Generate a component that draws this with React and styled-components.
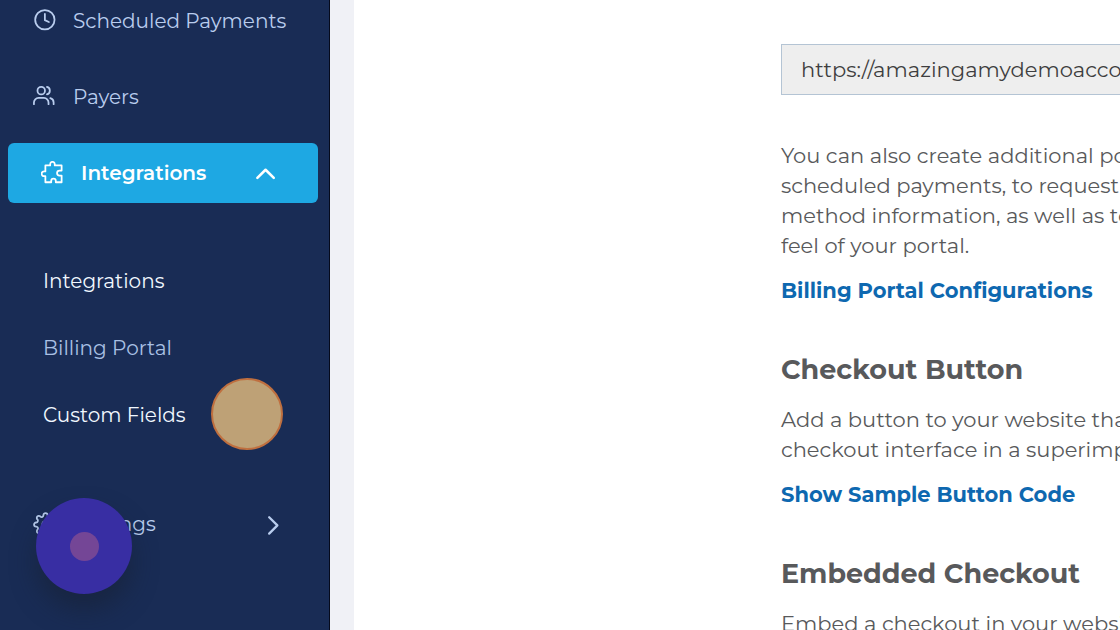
import React, { useState } from 'react'
import styled, { createGlobalStyle } from 'styled-components'
import { FiSettings } from 'react-icons/fi'

const GlobalStyle = createGlobalStyle`
  * {
    box-sizing: border-box;
  }
  body {
    margin: 0;
    background: #fff;
    font-family: Montserrat, Inter, sans-serif;
  }
`

const Page = styled.div`
  display: flex;
  height: 100vh;
  overflow: hidden;
`

const Sidebar = styled.aside`
  flex: none;
  width: 330px;
  background: #192c55;
  border-right: 1px solid #050a1c;
`

const Nav = styled.nav`
  display: flex;
  flex-direction: column;
  gap: 16px;
  margin-top: -9px;
`

const navRow = `
  display: flex;
  align-items: center;
  gap: 15px;
  height: 60px;
  padding: 0 36px 0 33px;
  font-size: 20px;
`

const NavLink = styled.a`
  ${navRow}
  color: #b9cdee;
  text-decoration: none;
`

const NavButton = styled.button`
  ${navRow}
  font-family: inherit;
  font-weight: ${(props) => (props.$active ? 600 : 400)};
  color: ${(props) => (props.$active ? '#fff' : '#b9cdee')};
  background: ${(props) => (props.$active ? '#1ea8e3' : 'transparent')};
  border: none;
  border-radius: 6px;
  margin: ${(props) => (props.$active ? '0 11px 0 8px' : '0 4px 0 0')};
  cursor: pointer;
`

const Label = styled.span`
  flex: 1;
  text-align: left;
`

const SubNav = styled.div`
  display: flex;
  flex-direction: column;
  margin: 28px 0 30px;
`

const SubLink = styled.a`
  position: relative;
  display: flex;
  align-items: center;
  height: 67px;
  padding-left: 43px;
  font-size: 20px;
  color: ${(props) => (props.$muted ? '#a9c0e4' : '#f1f8ff')};
  text-decoration: none;
`

const ClickMarker = styled.span`
  position: absolute;
  top: -3px;
  left: 211px;
  width: 72px;
  height: 72px;
  border-radius: 50%;
  background: #bea176;
  border: 2px solid #bf6f3f;
`

const Launcher = styled.button`
  position: fixed;
  left: 36px;
  bottom: 36px;
  display: flex;
  align-items: center;
  justify-content: center;
  width: 96px;
  height: 96px;
  padding: 0;
  border: none;
  border-radius: 50%;
  background: #382ea3;
  box-shadow: 0 16px 24px rgba(24, 34, 54, 0.6);
  cursor: pointer;
`

const LauncherDot = styled.span`
  width: 29px;
  height: 29px;
  border-radius: 50%;
  background: #744696;
`

const Main = styled.main`
  flex: 1;
  min-width: 0;
  overflow: hidden;
  border-left: 24px solid #f0f1f6;
  padding: 44px 0 0 427px;
  color: #58595b;
  white-space: nowrap;
`

const UrlInput = styled.input`
  display: block;
  width: 640px;
  height: 51px;
  margin-bottom: 46px;
  padding: 0 19px;
  border: 1px solid #b4c4d4;
  background: #eee;
  color: #3e3e40;
  font-family: inherit;
  font-size: 21px;
  font-weight: 400;
`

const Section = styled.section`
  margin-bottom: 46px;
`

const Title = styled.h2`
  margin: 0 0 17px;
  font-size: 27px;
  line-height: 36px;
  font-weight: 700;
`

const Text = styled.p`
  margin: 0 0 15px;
  font-size: 21px;
  line-height: 30px;
  font-weight: 400;
`

const TextLink = styled.a`
  display: block;
  font-size: 21px;
  line-height: 30px;
  font-weight: 700;
  color: #0e68b0;
  text-decoration: none;
`

const Icon = ({ size = 24, width = 2, children }) => (
  <svg
    width={size}
    height={size}
    viewBox="0 0 24 24"
    fill="none"
    stroke="currentColor"
    strokeWidth={width}
    strokeLinecap="round"
    strokeLinejoin="round"
    aria-hidden="true"
  >
    {children}
  </svg>
)

const ClockIcon = () => (
  <Icon size={25} width={1.7}>
    <circle cx="11.4" cy="10.3" r="9.3" />
    <path d="M11.4 4.8V10.7L15.2 12.5" />
  </Icon>
)

const PayersIcon = () => (
  <Icon size={25} width={1.7}>
    <circle cx="7.9" cy="5.4" r="3.6" />
    <path d="M0.9 18.4V16.8A4.4 4.4 0 0 1 5.3 12.4H10.5A4.4 4.4 0 0 1 14.9 16.8V18.4" />
    <path d="M13.4 1.9A3.6 3.6 0 0 1 13.4 8.9" />
    <path d="M19.8 18.4V16.8A4.4 4.4 0 0 0 16.6 12.6" />
  </Icon>
)

const PuzzleIcon = () => (
  <Icon size={25} width={1.7}>
    <path d="M4.2 4.2H8.8V3A2.2 2.2 0 0 1 13.2 3V4.2H19.8V9.2H17.8A2.4 2.4 0 0 0 17.8 14H19.8V20.4H14.2V19.2A2.2 2.2 0 0 0 9.8 19.2V20.4H4.2V14.6H2.9A2.3 2.3 0 0 1 2.9 10H4.2Z" />
  </Icon>
)

const App = () => {
  const [open, setOpen] = useState(true)
  const [url, setUrl] = useState('https://amazingamydemoaccount')

  return (
    <Page>
      <GlobalStyle />
      <Sidebar>
        <Nav>
          <NavLink href="#scheduled">
            <ClockIcon />
            <Label>Scheduled Payments</Label>
          </NavLink>
          <NavLink href="#payers">
            <PayersIcon />
            <Label>Payers</Label>
          </NavLink>
          <NavButton $active aria-expanded={open} onClick={() => setOpen(!open)}>
            <PuzzleIcon />
            <Label>Integrations</Label>
            <Icon size={34} width={1.8}>
              <path d="M6.6 15.5L12.4 9.7L18.2 15.5" />
            </Icon>
          </NavButton>
          {open && (
            <SubNav>
              <SubLink href="#integrations">Integrations</SubLink>
              <SubLink href="#portal" $muted>Billing Portal</SubLink>
              <SubLink href="#fields">
                Custom Fields
                <ClickMarker />
              </SubLink>
            </SubNav>
          )}
          <NavButton>
            <FiSettings size={25} strokeWidth={1.7} />
            <Label>Settings</Label>
            <Icon size={34} width={1.6}>
              <path d="M10 7.2L15.8 13L10 18.8" />
            </Icon>
          </NavButton>
        </Nav>
      </Sidebar>
      <Main>
        <UrlInput aria-label="Portal URL" value={url} onChange={(e) => setUrl(e.target.value)} />
        <Section>
          <Text>
            You can also create additional portals<br />
            scheduled payments, to request<br />
            method information, as well as to<br />
            feel of your portal.
          </Text>
          <TextLink href="#configurations">Billing Portal Configurations</TextLink>
        </Section>
        <Section>
          <Title>Checkout Button</Title>
          <Text>
            Add a button to your website that<br />
            checkout interface in a superimposed
          </Text>
          <TextLink href="#button-code">Show Sample Button Code</TextLink>
        </Section>
        <Section>
          <Title>Embedded Checkout</Title>
          <Text>Embed a checkout in your website</Text>
        </Section>
      </Main>
      <Launcher aria-label="Open help">
        <LauncherDot />
      </Launcher>
    </Page>
  )
}

export default App
